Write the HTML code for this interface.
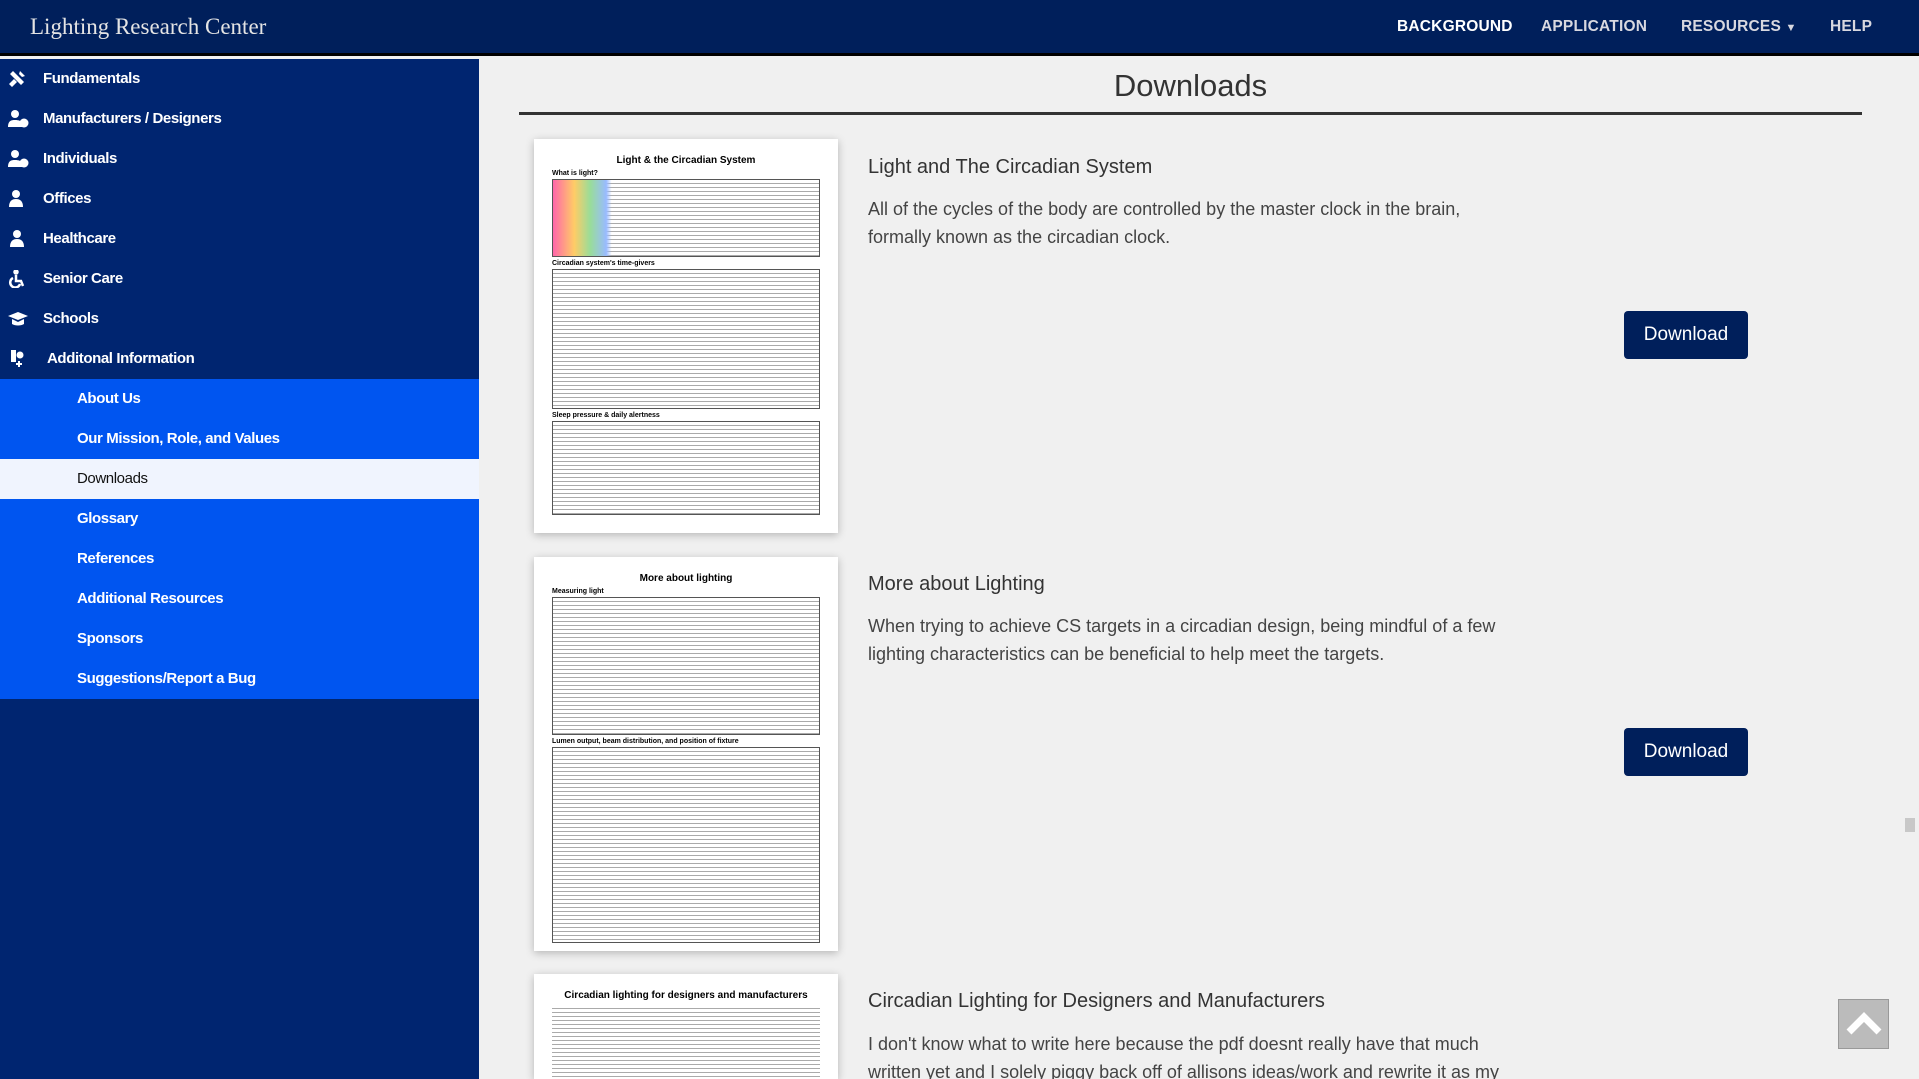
<!DOCTYPE html>
<html><head><meta charset="utf-8"><style>
*{margin:0;padding:0;box-sizing:border-box}
html,body{width:1919px;height:1079px;overflow:hidden}
body{background:#f0f0f0;font-family:"Liberation Sans",sans-serif;position:relative}
.hdr{position:absolute;left:0;top:0;width:1919px;height:56px;background:#001f5b;border-bottom:3px solid #000}
.logo{position:absolute;left:30px;top:14px;font-family:"Liberation Serif",serif;font-size:23px;color:#e4e4e4}
.nav{position:absolute;top:18px;font-size:15.5px;font-weight:bold;color:#d8d8e0;letter-spacing:.2px}
.side{position:absolute;left:0;top:59px;width:479px;height:1020px;background:#002570}
.it{height:40px;line-height:40px;color:#fff;font-size:15px;font-weight:bold;letter-spacing:-.4px;position:relative;padding-left:43px}
.it svg{position:absolute;left:8px;top:11px}
.sub{background:#0055f0}
.sub .it{padding-left:77px}
.sub .act{background:#f0f4fe;color:#111;font-weight:normal}
.h1{position:absolute;left:519px;width:1343px;top:68px;text-align:center;font-size:31px;color:#333}
.hr{position:absolute;left:519px;width:1343px;top:112px;height:3px;background:#333}
.card{position:absolute;left:534px;width:304px;height:394px;background:#fff;box-shadow:0 2px 8px rgba(0,0,0,.25);padding:16px 18px;overflow:hidden}
.card .t{text-align:center;font-size:10px;font-weight:bold;margin-bottom:4px}
.card .s{font-size:7px;font-weight:bold;margin:3px 0 2px}
.box{border:1px solid #555;background:repeating-linear-gradient(#fff 0 3px,#aaa 3px 4px);}
.ti{position:absolute;left:868px;font-size:20px;color:#333}
.tx{position:absolute;left:868px;font-size:18px;color:#444;line-height:28px;width:660px}
.btn{position:absolute;left:1624px;width:124px;height:48px;background:#001f5b;color:#fff;border-radius:4px;font-size:19px;text-align:center;line-height:48px}
</style></head><body>
<div class="hdr"><div class="logo">Lighting Research Center</div>
<div class="nav" style="left:1397px;color:#fff">BACKGROUND</div>
<div class="nav" style="left:1541px">APPLICATION</div>
<div class="nav" style="left:1681px">RESOURCES <span style="font-size:11px">▼</span></div>
<div class="nav" style="left:1830px">HELP</div></div>
<div class="side">
<div class="it"><svg width="18" height="18" viewBox="0 0 18 18" fill="#fff"><path d="M2 4l3-3 11 11-3 3zM12 1l5 5-3 1-3-3zM1 14l5-5 3 3-5 5z"/></svg>Fundamentals</div>
<div class="it"><svg width="22" height="18" viewBox="0 0 22 18" fill="#fff"><circle cx="7" cy="4" r="4"/><path d="M0 17c0-6 3-7 7-7s6 1 7 3v4z"/><circle cx="16" cy="13" r="4.5"/></svg>Manufacturers / Designers</div>
<div class="it"><svg width="22" height="18" viewBox="0 0 22 18" fill="#fff"><circle cx="7" cy="4" r="4"/><path d="M0 17c0-6 3-7 7-7s6 1 7 3v4z"/><circle cx="16" cy="13" r="4.5"/></svg>Individuals</div>
<div class="it"><svg width="18" height="18" viewBox="0 0 18 18" fill="#fff"><circle cx="8" cy="4" r="4"/><path d="M1 17c0-6 3-8 7-8s7 2 7 8z"/></svg>Offices</div>
<div class="it"><svg width="18" height="18" viewBox="0 0 18 18" fill="#fff"><circle cx="9" cy="4" r="4"/><path d="M2 17c0-6 3-8 7-8s7 2 7 8z"/></svg>Healthcare</div>
<div class="it"><svg width="18" height="18" viewBox="0 0 18 18" fill="none" stroke="#fff" stroke-width="2.5"><circle cx="8" cy="2" r="1.5" fill="#fff"/><path d="M8 5v6h5l2 5M5 8a5 5 0 1 0 7 6"/></svg>Senior Care</div>
<div class="it"><svg width="22" height="18" viewBox="0 0 22 18" fill="#fff"><path d="M0 6l10-4 10 4-10 4zM4 9v5c3 2 9 2 12 0V9l-6 3z"/></svg>Schools</div>
<div class="it" style="padding-left:47px"><svg width="18" height="20" viewBox="0 0 18 20" fill="#fff"><rect x="3" y="0" width="5" height="12"/><circle cx="12" cy="5" r="3.5"/><path d="M8 14h6M11 11v6" stroke="#fff" stroke-width="2"/></svg>Additonal Information</div>
<div class="sub">
<div class="it">About Us</div><div class="it">Our Mission, Role, and Values</div><div class="it act">Downloads</div><div class="it">Glossary</div><div class="it">References</div><div class="it">Additional Resources</div><div class="it">Sponsors</div><div class="it">Suggestions/Report a Bug</div>
</div></div>
<div class="h1">Downloads</div><div class="hr"></div>

<div class="card" style="top:139px"><div class="t">Light &amp; the Circadian System</div><div class="s">What is light?</div><div class="box" style="height:78px;background:linear-gradient(90deg,#f6a 0,#fc6 8%,#9d9 14%,#9bf 20%,transparent 22%),repeating-linear-gradient(#fff 0 3px,#aaa 3px 4px)"></div><div class="s">Circadian system's time-givers</div><div class="box" style="height:140px"></div><div class="s">Sleep pressure &amp; daily alertness</div><div class="box" style="height:94px"></div></div>
<div class="ti" style="top:156px">Light and The Circadian System</div>
<div class="tx" style="top:195px">All of the cycles of the body are controlled by the master clock in the brain, formally known as the circadian clock.</div>
<div class="btn" style="top:311px">Download</div>

<div class="card" style="top:557px"><div class="t">More about lighting</div><div class="s">Measuring light</div><div class="box" style="height:138px"></div><div class="s">Lumen output, beam distribution, and position of fixture</div><div class="box" style="height:196px"></div></div>
<div class="ti" style="top:573px">More about Lighting</div>
<div class="tx" style="top:612px">When trying to achieve CS targets in a circadian design, being mindful of a few lighting characteristics can be beneficial to help meet the targets.</div>
<div class="btn" style="top:728px">Download</div>

<div class="card" style="top:974px;height:105px"><div class="t">Circadian lighting for designers and manufacturers</div><div class="box" style="height:90px;border:none"></div></div>
<div class="ti" style="top:990px">Circadian Lighting for Designers and Manufacturers</div>
<div class="tx" style="top:1030px">I don't know what to write here because the pdf doesnt really have that much written yet and I solely piggy back off of allisons ideas/work and rewrite it as my</div>

<div style="position:absolute;left:1904px;top:59px;width:15px;height:1020px;background:#f0f0f0"></div>
<div style="position:absolute;left:1905px;top:818px;width:10px;height:14px;background:#c8c8c8"></div>
<div style="position:absolute;left:1838px;top:999px;width:51px;height:50px;background:#bbb;border:1px solid #999"><svg width="51" height="50" viewBox="0 0 51 50"><path d="M10 32l15-15 15 15" fill="none" stroke="#fff" stroke-width="7"/></svg></div>
</body></html>
